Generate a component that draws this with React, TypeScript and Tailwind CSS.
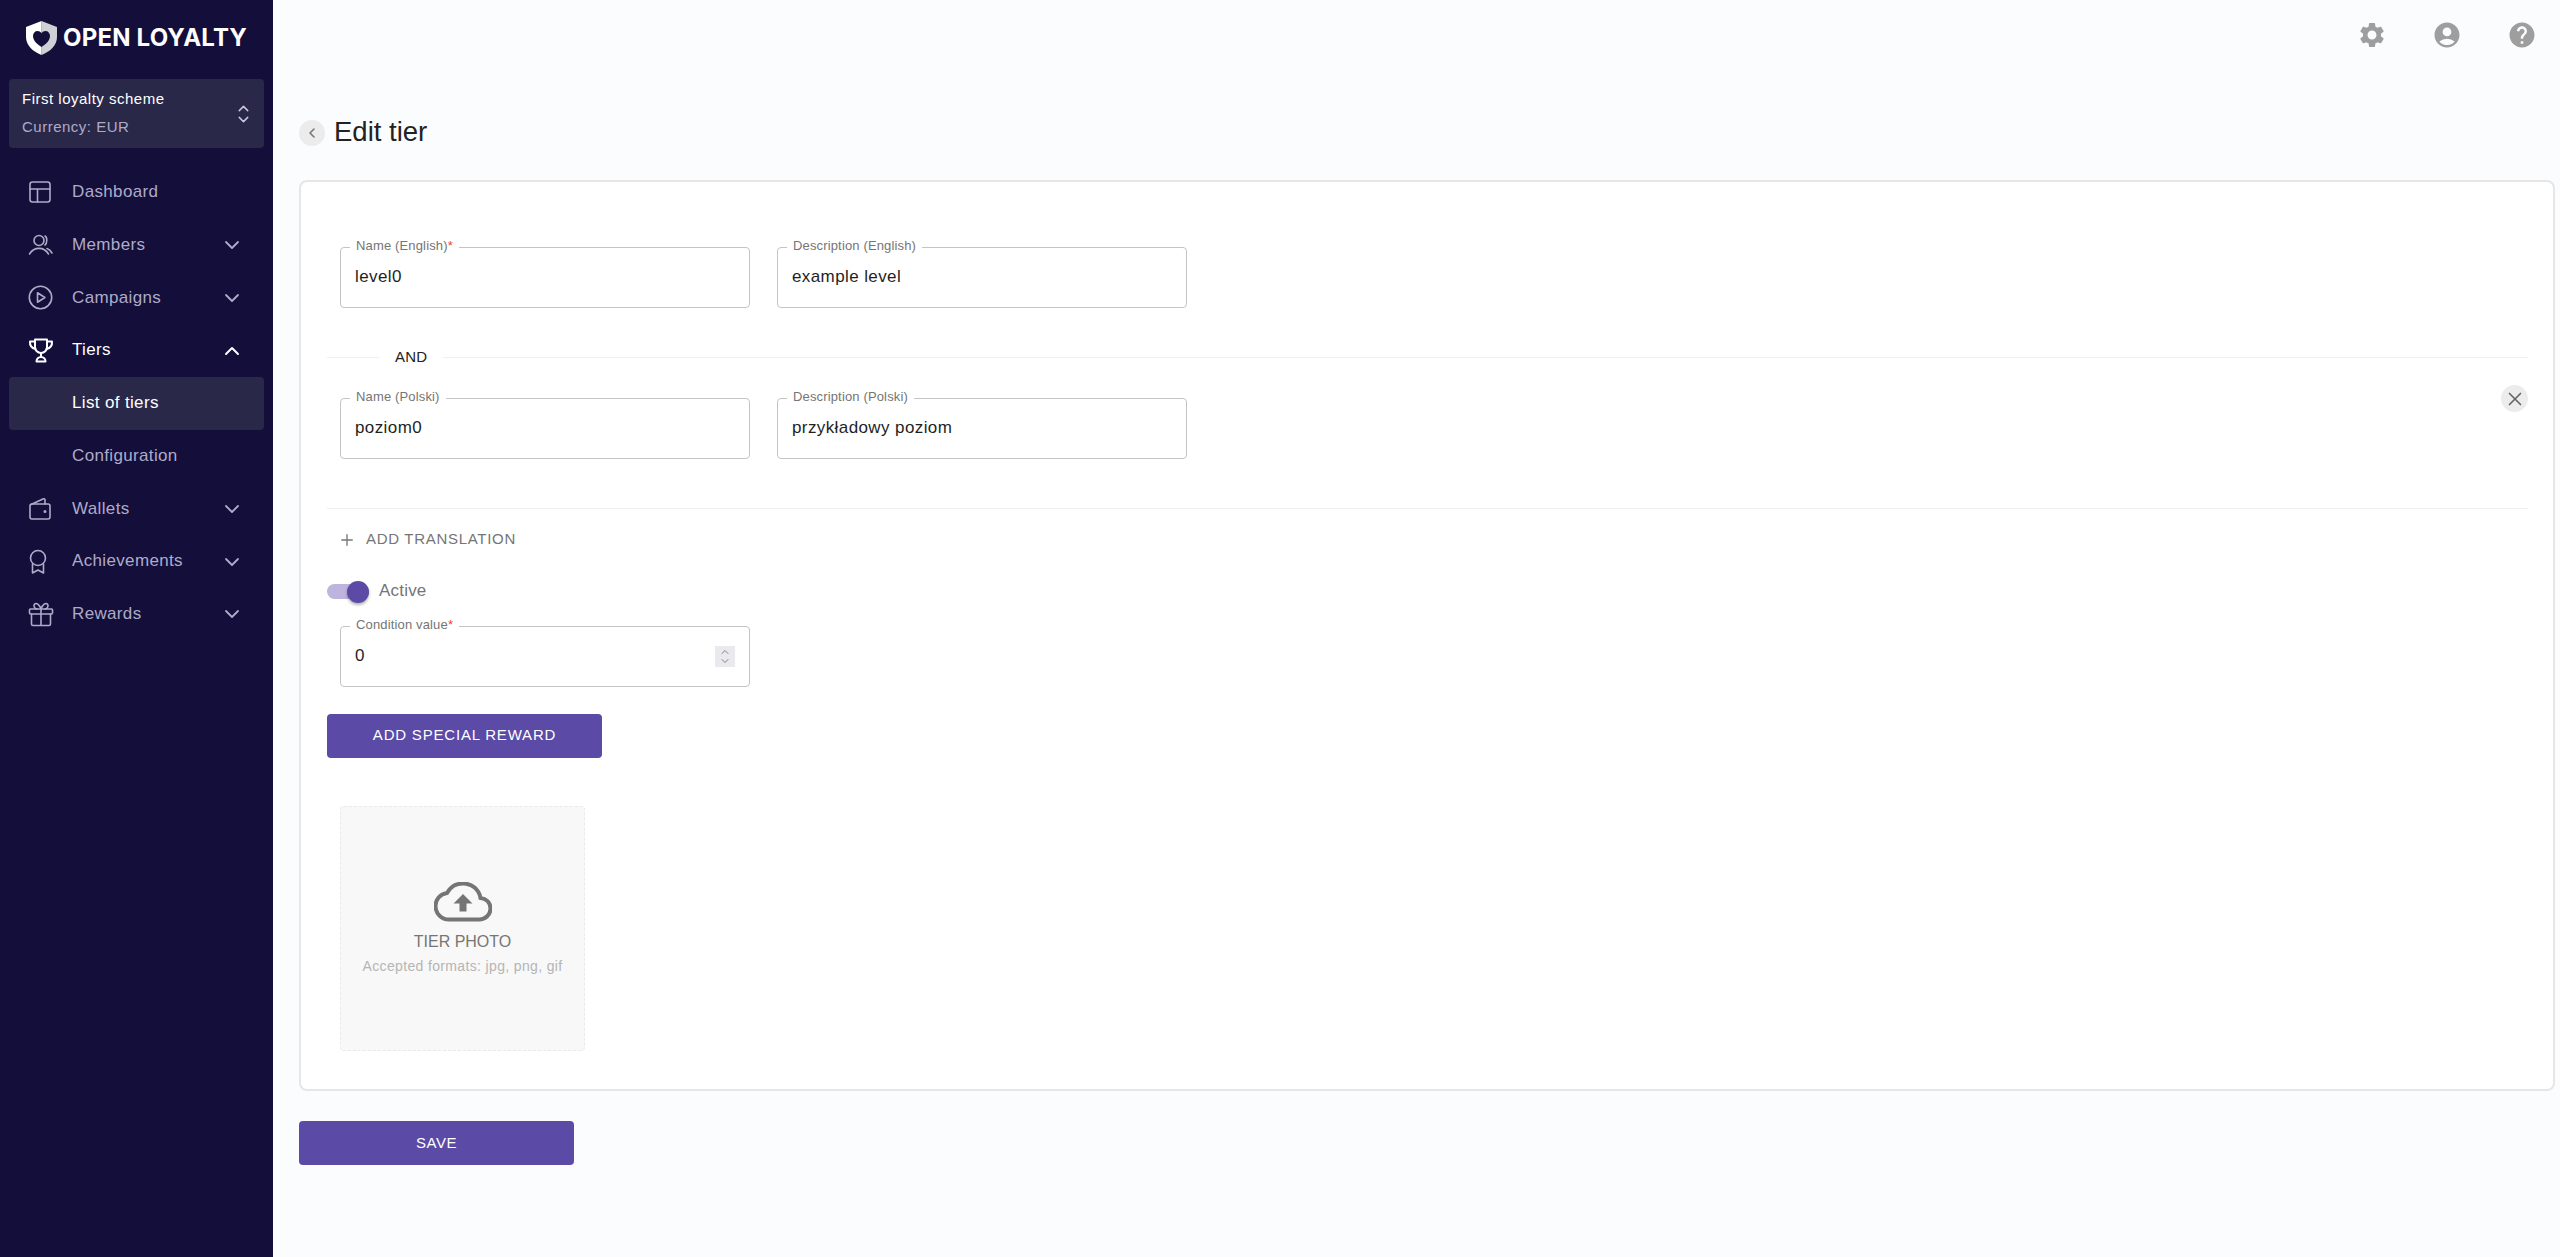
import React from "react";
import { MdSettings, MdAccountCircle, MdHelp } from "react-icons/md";
import { ChevronDown, ChevronUp, ChevronLeft, X, Plus } from "lucide-react";

const ic = { fill: "none", stroke: "currentColor", strokeWidth: 1.6, strokeLinecap: "round" as const, strokeLinejoin: "round" as const };

const Icons: Record<string, React.ReactNode> = {
  dashboard: (
    <svg width="24" height="24" viewBox="0 0 24 24" {...ic}>
      <rect x="2" y="2" width="20" height="20" rx="2.500" />
      <path d="M2 9h20M9.500 9v13" />
    </svg>
  ),
  members: (
    <svg width="26" height="24" viewBox="0 0 26 24" {...ic}>
      <circle cx="11" cy="7.500" r="5" />
      <path d="M17 3c2.400 1.200 2.400 7.400 0 9M1.500 21c2.500-4 6-5.600 9.500-5.600S18 17 20.500 21M19 15.500c2.200.6 3.900 2.500 5 4.500" />
    </svg>
  ),
  campaigns: (
    <svg width="25" height="25" viewBox="0 0 25 25" {...ic}>
      <circle cx="12.500" cy="12.500" r="11.200" />
      <path d="M9.500 7.800v9.400l7.400-4.700z" />
    </svg>
  ),
  tiers: (
    <svg width="26" height="25" viewBox="0 0 26 25" {...ic} strokeWidth={2}>
      <path d="M7 1.500h12v7.500c0 3.300-2.700 6-6 6s-6-2.700-6-6z" />
      <path d="M7 3.500H2c-.3 4 1.500 6.500 5.500 7.500M19 3.500h5c.3 4-1.500 6.500-5.500 7.500M13 15v4M8.500 23.500c0-2.500 2-4.500 4.500-4.500s4.500 2 4.500 4.500z" />
    </svg>
  ),
  wallets: (
    <svg width="24" height="24" viewBox="0 0 24 24" {...ic}>
      <rect x="2" y="7" width="20" height="15" rx="2" />
      <path d="M3 7.500 15.500 1.800c.7-.3 1.500.2 1.500 1V7" />
      <circle cx="17" cy="14.500" r=".7" fill="currentColor" />
    </svg>
  ),
  achievements: (
    <svg width="20" height="26" viewBox="0 0 20 26" {...ic}>
      <circle cx="10" cy="9" r="7.500" />
      <path d="M4.500 15v9l5.500-3 5.500 3v-9" />
    </svg>
  ),
  rewards: (
    <svg width="26" height="25" viewBox="0 0 26 25" {...ic}>
      <rect x="1.500" y="7" width="23" height="5" rx="1" />
      <path d="M3.500 12v10c0 .8.700 1.500 1.500 1.500h16c.8 0 1.500-.7 1.500-1.500V12M13 7v16.500M13 7C11 2 8.500 1 7 1.800 5 3 6 7 9 7M13 7c2-5 4.500-6 6-5.200C21 3 20 7 17 7" />
    </svg>
  ),
};

function NavItem({ icon, label, chevron, active, open }: { icon?: string; label: string; chevron?: boolean; active?: boolean; open?: boolean }) {
  return (
    <div
      className={
        "mx-[9px] flex h-[52.75px] items-center rounded-[4px] pl-[19px] pr-[20px] text-[17px] tracking-[0.35px] " +
        (active ? "bg-[#2a2849] text-white" : open ? "text-white" : "text-[#aeabc9]")
      }
    >
      <span className="flex w-[44px] shrink-0 items-center">{icon ? Icons[icon] : null}</span>
      <span className="-mt-[1px] flex-1">{label}</span>
      {chevron ? (
        open ? <ChevronUp size={24} strokeWidth={2} /> : <ChevronDown size={24} strokeWidth={1.8} />
      ) : null}
    </div>
  );
}

function Field({ label, value, required, spin }: { label: string; value: string; required?: boolean; spin?: boolean }) {
  return (
    <div className="relative flex h-[61px] w-[410px] items-center justify-between rounded-[4px] border border-[#c4c4c4] bg-white pl-[14px] pr-[14px]">
      <span className="absolute -top-[10px] left-[9px] bg-white px-[6px] text-[13px] leading-[16px] tracking-[0.15px] text-[#757575]">
        {label}
        {required ? <span className="text-[#f44336]">*</span> : null}
      </span>
      <span className="-mt-[2px] text-[17px] tracking-[0.4px] text-[#1f1f1f]">{value}</span>
      {spin ? (
        <span className="flex h-[21px] w-[20px] flex-col items-center justify-center bg-[#e9e9ee] text-[#777]">
          <ChevronUp size={14} strokeWidth={1.8} className="-mb-[3px]" />
          <ChevronDown size={14} strokeWidth={1.8} />
        </span>
      ) : null}
    </div>
  );
}

export default function App() {
  return (
    <div className="flex min-h-[1257px] bg-[#fbfcfe] font-['Liberation_Sans',sans-serif]">
      <aside className="w-[273px] shrink-0 bg-[#130e3a]">
        <div className="flex h-[79px] items-center pl-[26px]">
          <svg width="31" height="34" viewBox="0 0 31 34" className="-mt-[4px]">
            <path d="M15.500 0 31 6v10c0 8-6.500 14.500-15.500 18z" fill="#cfcfd6" />
            <path d="M15.500 0 0 6v10c0 8 6.500 14.500 15.500 18z" fill="#ffffff" />
            <path d="M15.500 26c-5-3-8.500-7-8.500-11 0-3 2-5 4.500-5 1.700 0 3 .8 4 2.200 1-1.400 2.300-2.200 4-2.200 2.500 0 4.500 2 4.500 5 0 4-3.500 8-8.500 11z" fill="#130e3a" />
          </svg>
          <span className="-mt-[3px] ml-[6px] whitespace-nowrap font-['Inter',sans-serif] text-[24px] font-bold leading-none tracking-[0.2px] text-white">OPEN LOYALTY</span>
        </div>
        <div className="mx-[9px] flex h-[69px] items-center justify-between rounded-[4px] bg-[#2a2849] pl-[13px] pr-[12px]">
          <div className="-mt-[3px] flex flex-col gap-[11px] text-[15px] leading-[17px] tracking-[0.5px]">
            <span className="text-white">First loyalty scheme</span>
            <span className="text-[#aeabc9]">Currency: EUR</span>
          </div>
          <span className="flex flex-col text-[#c9c7dc]">
            <ChevronUp size={17} strokeWidth={2} className="-mb-[6px]" />
            <ChevronDown size={17} strokeWidth={2} />
          </span>
        </div>
        <nav className="mt-[18px]">
          <NavItem icon="dashboard" label="Dashboard" />
          <NavItem icon="members" label="Members" chevron />
          <NavItem icon="campaigns" label="Campaigns" chevron />
          <NavItem icon="tiers" label="Tiers" chevron open />
          <NavItem label="List of tiers" active />
          <NavItem label="Configuration" />
          <NavItem icon="wallets" label="Wallets" chevron />
          <NavItem icon="achievements" label="Achievements" chevron />
          <NavItem icon="rewards" label="Rewards" chevron />
        </nav>
      </aside>

      <main className="min-w-0 flex-1 pl-[26px] pr-[5px]">
        <div className="flex h-[70px] items-center justify-end gap-[45px] pr-[18px] text-[#9e9e9e]">
          <MdSettings size={30} />
          <MdAccountCircle size={30} />
          <MdHelp size={30} />
        </div>
        <div className="mt-[46px] flex h-[34px] items-center">
          <span className="flex h-[26px] w-[26px] items-center justify-center rounded-full bg-[#ececec] text-[#777]">
            <ChevronLeft size={16} strokeWidth={2.4} />
          </span>
          <h1 className="-mt-[2px] ml-[9px] text-[27.5px] font-normal leading-[34px] text-[#222]">Edit tier</h1>
        </div>

        <section className="mt-[30px] h-[911px] rounded-[8px] border-2 border-[#e6e6e6] bg-white pl-[26px] pr-[25px] pt-[65px]">
          <div className="ml-[13px] flex gap-[27px]">
            <Field label="Name (English)" value="level0" required />
            <Field label="Description (English)" value="example level" />
          </div>

          <div className="mt-[37px] flex h-[24px] items-center">
            <span className="h-px w-[52px] bg-[#f0f0f0]" />
            <span className="px-[16px] text-[15px] tracking-[0.2px] text-[#222]">AND</span>
            <span className="h-px flex-1 bg-[#f0f0f0]" />
          </div>

          <div className="ml-[13px] mt-[29px] flex items-start gap-[27px]">
            <Field label="Name (Polski)" value="poziom0" />
            <Field label="Description (Polski)" value="przykładowy poziom" />
            <span className="-mt-[13px] ml-auto flex h-[27px] w-[27px] items-center justify-center rounded-full bg-[#ececec] text-[#666]">
              <X size={22} strokeWidth={1.8} />
            </span>
          </div>

          <div className="mt-[49px] h-px bg-[#eeeeee]" />

          <div className="ml-[11px] mt-[20px] flex h-[20px] items-center text-[15px] tracking-[0.7px] text-[#757575]">
            <Plus size={18} strokeWidth={1.8} className="mt-[1px]" />
            <span className="ml-[10px]">ADD TRANSLATION</span>
          </div>

          <div className="mt-[26px] flex h-[32px] items-center">
            <span className="relative h-[15px] w-[42px] rounded-full bg-[#bdb5dd]">
              <span className="absolute -top-[3px] right-0 h-[22px] w-[22px] rounded-full bg-[#5b4aa6] shadow-[0_2px_3px_rgba(0,0,0,0.3)]" />
            </span>
            <span className="ml-[10px] text-[17px] tracking-[0.2px] text-[#757575]">Active</span>
          </div>

          <div className="ml-[13px] mt-[19px]">
            <Field label="Condition value" value="0" required spin />
          </div>

          <button className="mt-[27px] flex h-[44px] w-[275px] items-center justify-center rounded-[4px] bg-[#5b4aa6] pb-[2px] text-[15px] tracking-[0.8px] text-white">
            ADD SPECIAL REWARD
          </button>

          <div className="ml-[13px] mt-[48px] flex h-[245px] w-[245px] flex-col items-center rounded-[4px] border border-dashed border-[#eaeaea] bg-[#f8f8f8] pt-[75px]">
            <svg width="58" height="40" viewBox="0 0 58 40">
              <path d="M46.500 16C45 7.500 38 1.500 29 1.500 22 1.500 16 5.500 13 11 6 12 1.500 17.500 1.500 24c0 7.500 6 13.500 13.500 13.500h30C51.500 37.500 56.500 32.500 56.500 26.500c0-6-4.500-10-10-10.500z" fill="none" stroke="#757575" strokeWidth="4" />
              <path d="M29 12 19.500 21.500H25.500V29.500H32.500V21.500H38.500z" fill="#757575" />
            </svg>
            <span className="mt-[10px] text-[16px] leading-[20px] text-[#757575]">TIER PHOTO</span>
            <span className="mt-[5px] text-[14px] leading-[18px] tracking-[0.35px] text-[#b5b5b5]">Accepted formats: jpg, png, gif</span>
          </div>
        </section>

        <button className="mt-[30px] flex h-[44px] w-[275px] items-center justify-center rounded-[4px] bg-[#5b4aa6] text-[15px] tracking-[0.5px] text-white">
          SAVE
        </button>
      </main>
    </div>
  );
}
